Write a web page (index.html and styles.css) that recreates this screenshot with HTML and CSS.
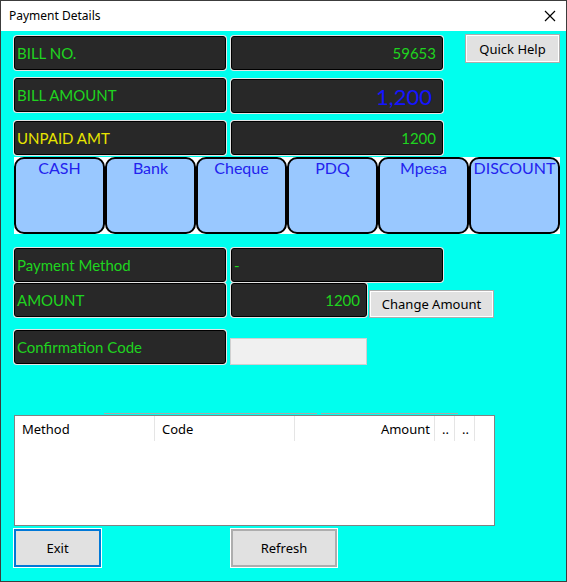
FILE: index.html
```html
<!DOCTYPE html>
<html>
<head>
<meta charset="utf-8">
<link rel="stylesheet" href="styles.css">
</head>
<body>
<div class="window">
  <div class="titlebar">
    <span class="title">Payment Details</span>
    <svg class="close" width="12" height="12" viewBox="0 0 12 12"><path d="M1 1 L11 11 M11 1 L1 11" stroke="#000" stroke-width="1.2" fill="none"/></svg>
  </div>
  <div class="content">
    <div class="row r1">
      <div class="box label green">BILL NO.</div>
      <div class="box value green">59653</div>
      <button class="btn quick">Quick Help</button>
    </div>
    <div class="row r2">
      <div class="box label green">BILL AMOUNT</div>
      <div class="box value big blue">1,200</div>
    </div>
    <div class="row r3">
      <div class="box label yellow">UNPAID AMT</div>
      <div class="box value green">1200</div>
    </div>
    <div class="paybar">
      <div class="paycell"><div class="pay">CASH</div></div>
      <div class="paycell"><div class="pay">Bank</div></div>
      <div class="paycell"><div class="pay">Cheque</div></div>
      <div class="paycell"><div class="pay">PDQ</div></div>
      <div class="paycell"><div class="pay">Mpesa</div></div>
      <div class="paycell"><div class="pay">DISCOUNT</div></div>
    </div>
    <div class="row r4">
      <div class="box label green">Payment Method</div>
      <div class="box value left green">-</div>
    </div>
    <div class="row r5">
      <div class="box label green">AMOUNT</div>
      <div class="box value short green">1200</div>
      <button class="btn change">Change Amount</button>
    </div>
    <div class="row r6">
      <div class="box label green">Confirmation Code</div>
      <div class="input"></div>
    </div>
    <div class="ghost"><span class="g1"></span><span class="g2"></span></div>
    <div class="list">
      <div class="lhead">
        <div class="col c1">Method</div>
        <div class="col c2">Code</div>
        <div class="col c3">Amount</div>
        <div class="col c4">..</div>
        <div class="col c5">..</div>
      </div>
    </div>
    <div class="row bottom">
      <button class="btn exit">Exit</button>
      <button class="btn refresh">Refresh</button>
    </div>
  </div>
</div>
</body>
</html>
```

FILE: styles.css
```css
html, body {
  margin: 0;
  padding: 0;
  background: #00ffee;
}
.window {
  width: 567px;
  height: 582px;
  box-sizing: border-box;
  border: 1px solid #3c3c3c;
  background: #00ffee;
  display: flex;
  flex-direction: column;
  overflow: hidden;
}
.titlebar {
  height: 30px;
  background: #fff;
  display: flex;
  align-items: center;
  justify-content: space-between;
  padding: 0 10px 0 8px;
  flex: none;
}
.title {
  font-family: "Noto Sans", "Open Sans", sans-serif;
  font-size: 12px;
  color: #000;
  margin-top: -1px;
}
.close { margin-right: 0; margin-top: -1px; }
.content {
  flex: 1;
  padding-left: 13px;
  display: flex;
  flex-direction: column;
  align-items: flex-start;
}
.row {
  display: flex;
  align-items: flex-start;
}
.r1 { margin-top: 3px; }
.r1 .label { margin-top: 2px; }
.r1 .value { margin-top: 2px; }
.r2 { margin-top: 8px; }
.r2 .value { margin-top: 1px; }
.r3 { margin-top: 8px; }
.r4 { margin-top: 14px; }
.r5 { margin-top: 1px; }
.r6 { margin-top: 12px; }
.box {
  box-sizing: border-box;
  height: 34px;
  width: 212px;
  background: #282828;
  border: 1px solid #000;
  border-radius: 3px;
  box-shadow: 0 0 0 1px #e4e4e4;
  font-family: "Lato", "Noto Sans", sans-serif;
  font-size: 15px;
  display: flex;
  align-items: center;
  white-space: nowrap;
}
.label { padding-left: 2px; }
.value {
  margin-left: 5px;
  justify-content: flex-end;
  padding-right: 6px;
}
.value.left { justify-content: flex-start; padding-left: 2px; }
.value.short { width: 136px; }
.big { font-size: 22px; padding-right: 10px; padding-top: 1px; }
.green { color: #1fd41f; }
.yellow { color: #e8e400; }
.blue { color: #1414ff; }
.btn {
  box-sizing: border-box;
  background: #e1e1e1;
  border: 1px solid #adadad;
  box-shadow: inset 0 0 0 1px #fff;
  font-family: "Noto Sans", "Open Sans", sans-serif;
  font-size: 13px;
  color: #000;
  padding: 0;
  margin: 0;
}
.quick { margin-left: 22px; width: 95px; height: 29px; }
.change { margin-left: 2px; margin-top: 7px; width: 125px; height: 28px; }
.paybar {
  margin-top: 2px;
  display: flex;
}
.paycell {
  width: 91px;
  height: 77px;
  background: #fff;
  box-sizing: border-box;
}
.pay {
  box-sizing: border-box;
  height: 100%;
  background: #99c8ff;
  border: 2px solid #000;
  border-radius: 10px;
  color: #2323ee;
  font-family: "Lato", "Noto Sans", sans-serif;
  font-size: 16px;
  text-align: center;
  padding-top: 0px;
  line-height: 18px;
  white-space: nowrap;
  overflow: visible;
}
.input {
  box-sizing: border-box;
  width: 137px;
  height: 27px;
  margin-left: 4px;
  margin-top: 8px;
  background: #f0f0f0;
  border: 1px solid #d0d0d0;
}
.ghost {
  margin-top: 48px;
  height: 1px;
  display: flex;
  position: relative;
}
.ghost .g1 { margin-left: 90px; width: 213px; height: 1px; background: #a8a8a8; }
.ghost .g2 { margin-left: 4px; width: 137px; height: 1px; background: #a8a8a8; }
.list {
  margin-top: 1px;
  width: 481px;
  height: 111px;
  box-sizing: border-box;
  border: 1px solid #828282;
  background: #fff;
}
.lhead {
  display: flex;
  height: 25px;
  font-family: "Noto Sans", "Open Sans", sans-serif;
  font-size: 13px;
  color: #000;
}
.col {
  box-sizing: border-box;
  height: 25px;
  border-right: 1px solid #e5e5e5;
  display: flex;
  align-items: center;
  padding-left: 7px;
}
.c1 { width: 140px; }
.c2 { width: 140px; }
.c3 { width: 140px; justify-content: flex-end; padding-right: 4px; }
.c4 { width: 20px; }
.c5 { width: 20px; }
.bottom { margin-top: 3px; }
.exit {
  width: 87px;
  height: 38px;
  border: 2px solid #0078d7;
  box-shadow: 0 0 0 1px #fff;
}
.refresh {
  margin-left: 130px;
  width: 106px;
  height: 38px;
  border: 2px solid #adadad;
  box-shadow: 0 0 0 1px #fff;
}
```
